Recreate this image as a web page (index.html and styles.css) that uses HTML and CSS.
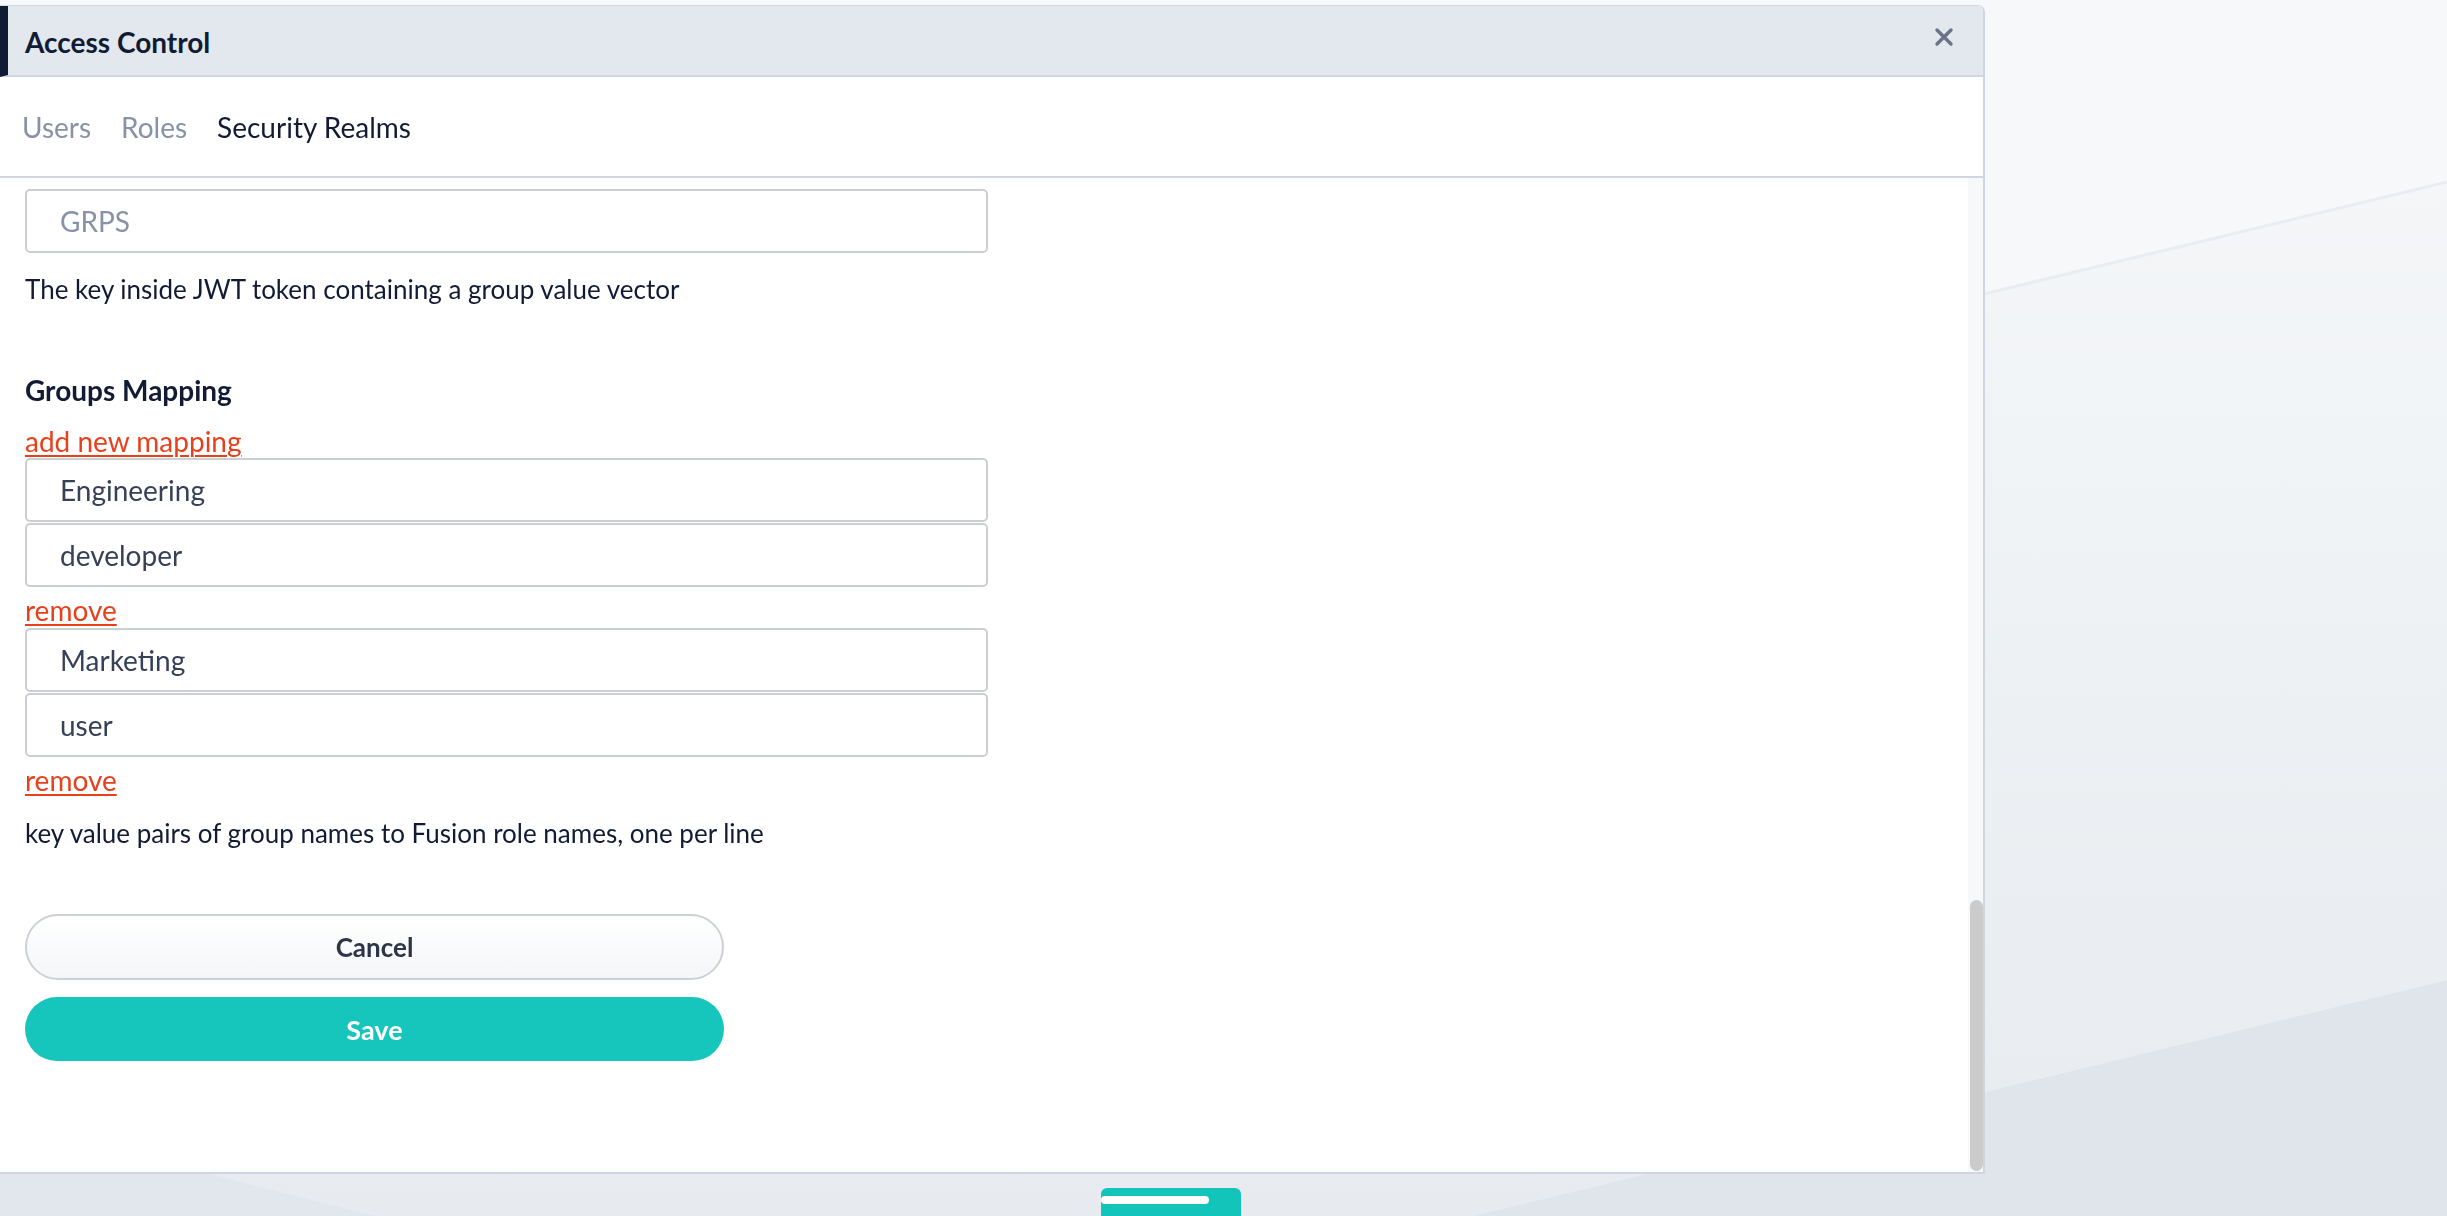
FILE: index.html
```html
<!DOCTYPE html>
<html lang="en">
<head>
<meta charset="utf-8">
<title>Access Control</title>
<link rel="stylesheet" href="styles.css">
</head>
<body>
<div class="backdrop">
  <svg viewBox="0 0 2447 1216" preserveAspectRatio="none" width="2447" height="1216">
    <defs>
      <linearGradient id="band" x1="0" y1="0" x2="0" y2="1">
        <stop offset="0" stop-color="#f4f6f8"/>
        <stop offset="1" stop-color="#e7ebef"/>
      </linearGradient>
    </defs>
    <rect x="0" y="0" width="2447" height="1216" fill="#f7f8fa"/>
    <polygon points="0,774 2447,182 2447,980 1472,1216 0,1216" fill="url(#band)"/>
    <polyline points="0,774 2447,182" fill="none" stroke="#e9edf2" stroke-width="3"/>
    <polygon points="2447,980 2447,1216 1472,1216" fill="#e0e5ec"/>
    <polygon points="0,1174 210,1174 375,1216 0,1216" fill="#e2e7ee"/>
  </svg>
</div>

<div class="page">
  <div class="panel">
    <div class="header">
      <h1 class="title">Access Control</h1>
      <button class="close" aria-label="Close">
        <svg viewBox="0 0 20 20" width="20" height="20"><path d="M3 3 L17 17 M17 3 L3 17" stroke="#6b7386" stroke-width="3.4" stroke-linecap="round"/></svg>
      </button>
    </div>
    <nav class="tabs">
      <span class="tab">Users</span>
      <span class="tab">Roles</span>
      <span class="tab active">Security Realms</span>
    </nav>
    <div class="body">
      <div class="content">
        <div class="field placeholder">GRPS</div>
        <p class="help first">The key inside JWT token containing a group value vector</p>
        <h2 class="section">Groups Mapping</h2>
        <a class="link add" href="#">add new mapping</a>
        <div class="field value">Engineering</div>
        <div class="field value pair">developer</div>
        <a class="link remove" href="#">remove</a>
        <div class="field value">Marketing</div>
        <div class="field value pair">user</div>
        <a class="link remove" href="#">remove</a>
        <p class="help second">key value pairs of group names to Fusion role names, one per line</p>
        <button class="btn cancel">Cancel</button>
        <button class="btn save">Save</button>
      </div>
      <div class="scrolltrack"><div class="thumb"></div></div>
    </div>
  </div>
  <div class="dock">
    <div class="dock-tab"><span class="dock-bar"></span></div>
  </div>
</div>
</body>
</html>
```

FILE: styles.css
```css
* { box-sizing: border-box; }

html, body {
  margin: 0;
  padding: 0;
  width: 2447px;
  height: 1216px;
  overflow: hidden;
}

body {
  font-family: Lato, "Open Sans", "Liberation Sans", sans-serif;
  color: #111b33;
  background: #f7f8fa;
}

.backdrop {
  position: fixed;
  inset: 0;
  z-index: 0;
}
.backdrop svg { display: block; }

.page {
  position: relative;
  z-index: 1;
  padding-top: 5px;
}

.panel {
  width: 1985px;
  height: 1169px;
  background: #ffffff;
  border-top: 1px solid #d3dae3;
  border-right: 2px solid #cfd6df;
  border-bottom: 2px solid #cfd6df;
  border-top-right-radius: 7px;
  display: flex;
  flex-direction: column;
  overflow: hidden;
}

.header {
  flex: 0 0 71px;
  background: #e3e8ef;
  border-left: 8px solid #111b33;
  border-bottom: 2px solid #cfd6df;
  display: flex;
  align-items: center;
  justify-content: space-between;
  padding: 2px 29px 0 17px;
}

.title {
  margin: 0;
  font-size: 28px;
  font-weight: 700;
  color: #111b33;
}

.close {
  border: 0;
  background: none;
  padding: 0;
  width: 20px;
  height: 20px;
  display: flex;
  margin-top: -10px;
}

.tabs {
  flex: 0 0 101px;
  border-bottom: 2px solid #cfd6df;
  display: flex;
  align-items: center;
  gap: 30px;
  padding: 1px 0 0 22px;
}

.tab {
  font-size: 28px;
  color: #8792a6;
}
.tab.active { color: #111b33; }

.body {
  flex: 1;
  display: flex;
  min-height: 0;
}

.content {
  flex: 1;
  display: flex;
  flex-direction: column;
  align-items: flex-start;
  padding: 11px 0 0 25px;
}

.field {
  width: 963px;
  height: 64px;
  border: 2px solid #cbced3;
  border-radius: 5px;
  display: flex;
  align-items: center;
  padding-left: 33px;
  font-size: 28px;
  flex-shrink: 0;
}
.field.placeholder { color: #8792a6; }
.field.value { color: #364057; }
.field.pair { margin-top: 1px; }

.help {
  margin: 0;
  font-size: 26px;
  line-height: 36px;
  color: #111b33;
}
.help.first { margin-top: 18px; }
.help.second { margin-top: 17px; }

.section {
  margin: 65px 0 0;
  font-size: 28px;
  line-height: 36px;
  font-weight: 700;
  color: #111b33;
}

.link {
  font-size: 28px;
  color: #e8401c;
  text-decoration: underline;
  text-decoration-thickness: 2px;
  text-underline-offset: 3px;
  line-height: 36px;
  height: 36px;
  flex-shrink: 0;
}
.link.add { margin-top: 16px; line-height: 34px; height: 34px; }
.link.remove { margin-top: 5px; }

.btn {
  width: 699px;
  font-family: inherit;
  border-radius: 40px;
  cursor: pointer;
  flex-shrink: 0;
}
.btn.cancel {
  margin-top: 63px;
  height: 66px;
  border: 2px solid #cdd1d6;
  background: linear-gradient(#ffffff, #f4f6f8);
  color: #2d3648;
  font-size: 26px;
  font-weight: 700;
}
.btn.save {
  margin-top: 17px;
  height: 64px;
  border: 0;
  background: #16c5bc;
  color: #ffffff;
  font-size: 27px;
  font-weight: 700;
}

.scrolltrack {
  flex: 0 0 15px;
  background: #f7f8fa;
  display: flex;
  flex-direction: column;
  justify-content: flex-end;
  padding: 0 0 1px 2px;
}
.thumb {
  height: 271px;
  background: #cbcbcb;
  border-radius: 7px;
}

.dock {
  padding: 14px 0 0 1101px;
}
.dock-tab {
  width: 140px;
  height: 28px;
  background: #13c4bb;
  border-radius: 6px 6px 0 0;
  padding-top: 8px;
}
.dock-bar {
  display: block;
  width: 108px;
  height: 8px;
  background: #ffffff;
  border-radius: 4px;
}
```
